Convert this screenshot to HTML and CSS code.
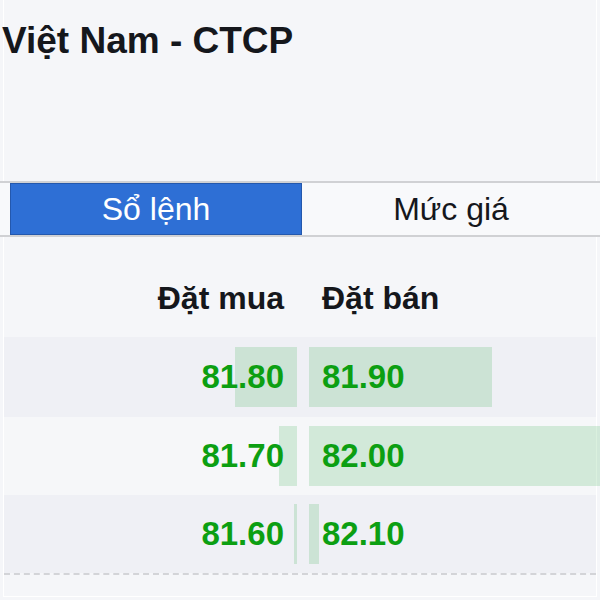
FILE: index.html
```html
<!DOCTYPE html>
<html lang="vi">
<head>
<meta charset="utf-8">
<title>Sổ lệnh</title>
<link rel="stylesheet" href="styles.css">
</head>
<body>
<div class="panel">
  <h1 class="title">Việt Nam - CTCP</h1>
  <div class="tabs">
    <div class="tab active">Sổ lệnh</div>
    <div class="tab">Mức giá</div>
  </div>
  <div class="book">
    <div class="head">
      <div class="hcell bid">Đặt mua</div>
      <div class="hcell ask">Đặt bán</div>
    </div>
    <div class="row dark r1">
      <div class="cell bid"><span class="bar" style="width:62px"></span><span class="num">81.80</span></div>
      <div class="cell ask"><span class="bar" style="width:183px"></span><span class="num">81.90</span></div>
    </div>
    <div class="row light r2">
      <div class="cell bid"><span class="bar" style="width:18px"></span><span class="num">81.70</span></div>
      <div class="cell ask"><span class="bar" style="width:291px"></span><span class="num">82.00</span></div>
    </div>
    <div class="row dark r3">
      <div class="cell bid"><span class="bar" style="width:3px"></span><span class="num">81.60</span></div>
      <div class="cell ask"><span class="bar" style="width:10px"></span><span class="num">82.10</span></div>
    </div>
  </div>
</div>
</body>
</html>
```

FILE: styles.css
```css
html, body {
  margin: 0;
  padding: 0;
  background: #f5f6f9;
  font-family: "Liberation Sans", Arial, sans-serif;
}

.panel {
  margin-left: 3px;
  width: 592px;
  height: 596px;
  border-left: 1px solid #ffffff;
  border-right: 1px solid #ffffff;
  border-bottom: 1px solid #ffffff;
  background: #f5f6f9;
}

.title {
  margin: 0 0 119px -2px;
  padding-top: 20px;
  font-size: 37px;
  line-height: 42px;
  font-weight: bold;
  color: #15171c;
  white-space: nowrap;
}

.tabs {
  display: flex;
  margin: 0 -4px 0 -4px;
  padding-left: 10px;
  border-top: 2px solid #d0d1d4;
  border-bottom: 2px solid #d0d1d4;
  height: 52px;
  background: #f8f9fb;
}

.tab {
  display: flex;
  align-items: center;
  justify-content: center;
  font-size: 32px;
  color: #15171c;
  flex: 1;
}

.tab.active {
  flex: 0 0 292px;
  box-sizing: border-box;
  background: #2e6fd5;
  border: 1px solid #2458ad;
  color: #ffffff;
}

.book {
  border-bottom: 2px dashed #d3d4d8;
}

.head,
.row {
  display: grid;
  grid-template-columns: 293px 291px;
  column-gap: 12px;
}

.head {
  height: 100px;
  box-sizing: border-box;
  padding-top: 21px;
  align-items: center;
}

.hcell {
  font-size: 32px;
  font-weight: bold;
  color: #15171c;
  line-height: 40px;
}

.hcell.bid {
  text-align: right;
  padding-right: 13px;
}

.hcell.ask {
  padding-left: 13px;
}

.row.dark { background: #eff0f5; }
.row.light { background: #f6f7f9; }
.row.r1 { height: 80px; }
.row.r2 { height: 78px; }
.row.r3 { height: 78px; }

.cell {
  display: grid;
  align-items: center;
}

.bar {
  grid-area: 1 / 1;
  height: 60px;
  background: rgba(24, 160, 48, 0.16);
}

.num {
  grid-area: 1 / 1;
  font-size: 33px;
  font-weight: bold;
  color: #0c9f12;
  line-height: 40px;
}

.cell.bid .bar,
.cell.bid .num {
  justify-self: end;
}

.cell.bid .num {
  padding-right: 13px;
}

.cell.ask .bar,
.cell.ask .num {
  justify-self: start;
}

.cell.ask .num {
  padding-left: 13px;
}
```
